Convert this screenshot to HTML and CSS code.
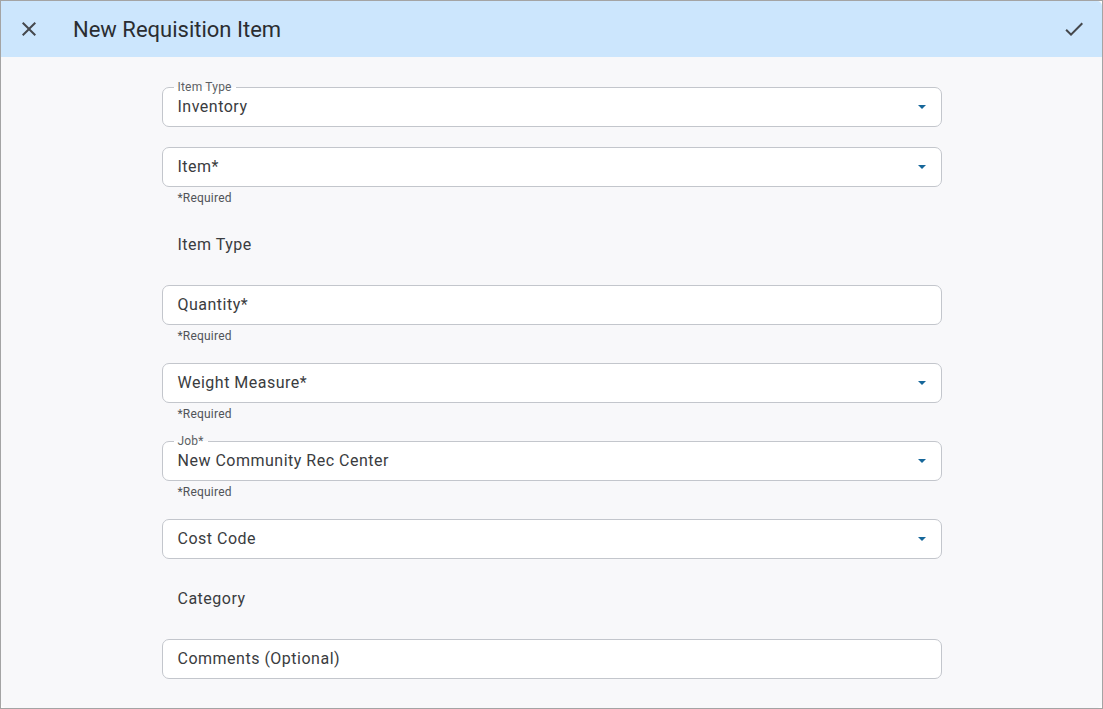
FILE: index.html
```html
<!DOCTYPE html>
<html lang="en">
<head>
<meta charset="utf-8">
<title>New Requisition Item</title>
<link rel="stylesheet" href="styles.css">
</head>
<body>
<div class="frame">
  <div class="app">
    <header class="toolbar">
      <button class="icon-btn" aria-label="Close">
        <svg width="24" height="24" viewBox="0 0 24 24"><path fill="#45484d" d="M19 6.41L17.59 5 12 10.59 6.41 5 5 6.41 10.59 12 5 17.59 6.41 19 12 13.41 17.59 19 19 17.59 13.41 12z"/></svg>
      </button>
      <h1 class="title">New Requisition Item</h1>
      <button class="icon-btn end" aria-label="Save">
        <svg width="24" height="24" viewBox="0 0 24 24"><path fill="#45484d" d="M9 16.17L4.83 12l-1.42 1.41L9 19 21 7l-1.41-1.41z"/></svg>
      </button>
    </header>
    <main class="content">
      <form class="form">
        <div class="group">
          <div class="field has-label">
            <span class="float-label">Item Type</span>
            <span class="value">Inventory</span>
            <svg class="arrow" width="8" height="4" viewBox="0 0 8 4"><path fill="#16679a" d="M0 0h8L4 4z"/></svg>
          </div>
        </div>
        <div class="group with-helper">
          <div class="field">
            <span class="value">Item*</span>
            <svg class="arrow" width="8" height="4" viewBox="0 0 8 4"><path fill="#16679a" d="M0 0h8L4 4z"/></svg>
          </div>
          <div class="helper">*Required</div>
        </div>
        <div class="group static">Item Type</div>
        <div class="group with-helper">
          <div class="field">
            <span class="value">Quantity*</span>
          </div>
          <div class="helper">*Required</div>
        </div>
        <div class="group with-helper">
          <div class="field">
            <span class="value">Weight Measure*</span>
            <svg class="arrow" width="8" height="4" viewBox="0 0 8 4"><path fill="#16679a" d="M0 0h8L4 4z"/></svg>
          </div>
          <div class="helper">*Required</div>
        </div>
        <div class="group with-helper">
          <div class="field has-label">
            <span class="float-label">Job*</span>
            <span class="value">New Community Rec Center</span>
            <svg class="arrow" width="8" height="4" viewBox="0 0 8 4"><path fill="#16679a" d="M0 0h8L4 4z"/></svg>
          </div>
          <div class="helper">*Required</div>
        </div>
        <div class="group">
          <div class="field">
            <span class="value">Cost Code</span>
            <svg class="arrow" width="8" height="4" viewBox="0 0 8 4"><path fill="#16679a" d="M0 0h8L4 4z"/></svg>
          </div>
        </div>
        <div class="group static">Category</div>
        <div class="group">
          <div class="field">
            <span class="value">Comments (Optional)</span>
          </div>
        </div>
      </form>
    </main>
  </div>
</div>
</body>
</html>
```
FILE: styles.css
```css
* { box-sizing: border-box; }
html, body {
  margin: 0;
  padding: 0;
  background: #ffffff;
}
body {
  font-family: Roboto, "Liberation Sans", Arial, sans-serif;
  color: #3a3c40;
}
.frame {
  width: 1103px;
  height: 709px;
  border: 1px solid #a4a4a4;
  background: #ffffff;
}
.app {
  height: 100%;
  display: flex;
  flex-direction: column;
  background: #f8f8fa;
  border-radius: 0 5px 5px 5px;
  overflow: hidden;
}
.toolbar {
  height: 56px;
  flex: 0 0 56px;
  background: #cce6fd;
  display: flex;
  align-items: center;
  padding: 0 16px;
}
.icon-btn {
  width: 24px;
  height: 24px;
  padding: 0;
  border: 0;
  background: none;
  display: flex;
  align-items: center;
  justify-content: center;
}
.icon-btn.end { margin-left: auto; }
.title {
  margin: 0 0 0 32px;
  font-size: 22px;
  font-weight: 400;
  letter-spacing: 0;
  color: #2a2d31;
}
.content {
  flex: 1;
  padding-top: 30px;
}
.form {
  width: 780px;
  margin: 0 auto;
  display: flex;
  flex-direction: column;
  gap: 20px;
}
.field {
  position: relative;
  height: 40px;
  background: #ffffff;
  border: 1px solid #c3c6cc;
  border-radius: 7px;
  display: flex;
  align-items: center;
  padding: 0 16px 0 15px;
}
.value {
  font-size: 16px;
  letter-spacing: 0.5px;
  color: #3a3c40;
  margin-top: -2px;
}
.has-label .value { margin-top: -1px; }
.float-label {
  position: absolute;
  top: -7px;
  left: 11px;
  padding: 0 4px;
  font-size: 12px;
  line-height: 12px;
  height: 12px;
  letter-spacing: 0.2px;
  color: #5c5f64;
  background: linear-gradient(#f8f8fa 0 50%, #ffffff 50% 100%);
}
.arrow {
  margin-left: auto;
  margin-right: -1px;
  margin-top: -1px;
}
.helper {
  height: 18px;
  padding: 4px 0 0 16px;
  font-size: 12px;
  line-height: 14px;
  letter-spacing: 0.2px;
  color: #505358;
}
.static {
  height: 40px;
  line-height: 40px;
  padding-left: 16px;
  font-size: 16px;
  letter-spacing: 0.5px;
  color: #3a3c40;
}
```
